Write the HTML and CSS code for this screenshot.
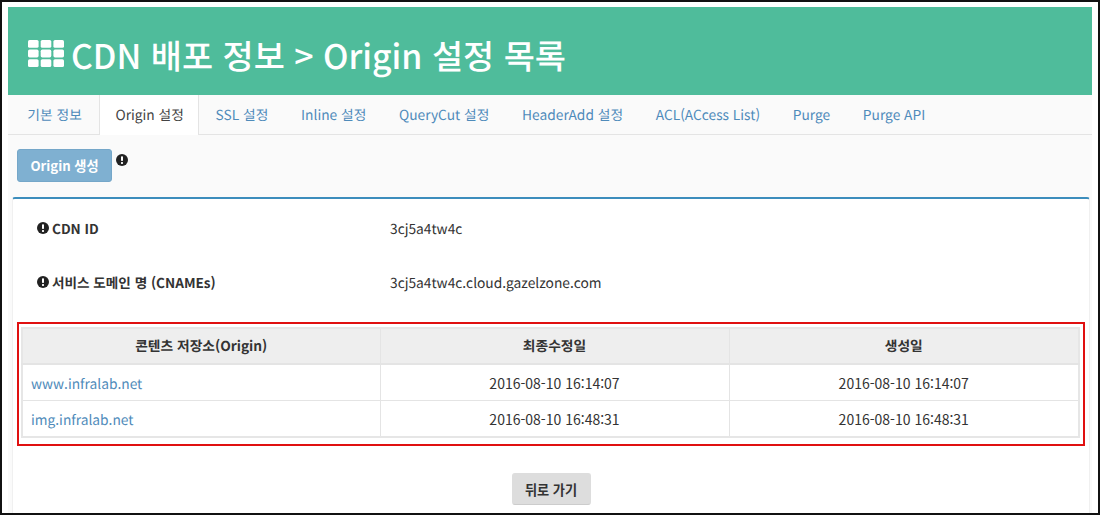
FILE: index.html
```html
<!DOCTYPE html>
<html lang="ko">
<head>
    <meta charset="UTF-8">
    <title>Origin 설정 목록</title>
    <link rel="stylesheet" href="styles.css">
</head>
<body>
    <div class="shot">
        <div class="page">
            <div class="title-bar">
                <h1>
                    <svg class="th-icon" viewBox="0 0 36 27" width="36" height="27">
                        <g fill="#fff">
                            <rect x="0" y="0" width="10.6" height="7.8" rx="1.6"/>
                            <rect x="12.7" y="0" width="10.6" height="7.8" rx="1.6"/>
                            <rect x="25.4" y="0" width="10.6" height="7.8" rx="1.6"/>
                            <rect x="0" y="9.6" width="10.6" height="7.8" rx="1.6"/>
                            <rect x="12.7" y="9.6" width="10.6" height="7.8" rx="1.6"/>
                            <rect x="25.4" y="9.6" width="10.6" height="7.8" rx="1.6"/>
                            <rect x="0" y="19.2" width="10.6" height="7.8" rx="1.6"/>
                            <rect x="12.7" y="19.2" width="10.6" height="7.8" rx="1.6"/>
                            <rect x="25.4" y="19.2" width="10.6" height="7.8" rx="1.6"/>
                        </g>
                    </svg>
                    <span>CDN 배포 정보 &gt; Origin 설정 목록</span>
                </h1>
            </div>

            <ul class="tabs">
                <li><a href="#">기본 정보</a></li>
                <li class="active"><a href="#">Origin 설정</a></li>
                <li><a href="#">SSL 설정</a></li>
                <li><a href="#">Inline 설정</a></li>
                <li><a href="#">QueryCut 설정</a></li>
                <li><a href="#">HeaderAdd 설정</a></li>
                <li><a href="#">ACL(ACcess List)</a></li>
                <li><a href="#">Purge</a></li>
                <li><a href="#">Purge API</a></li>
            </ul>

            <div class="toolbar">
                <button class="btn-primary">Origin 생성</button>
                <svg class="info-icon" viewBox="0 0 12 12" width="12" height="12">
                    <circle cx="6" cy="6" r="6" fill="#222"/>
                    <rect x="5" y="2.2" width="2" height="4.8" rx="0.8" fill="#fff"/>
                    <rect x="5" y="8" width="2" height="1.9" rx="0.6" fill="#fff"/>
                </svg>
            </div>

            <div class="box">
                <div class="field">
                    <div class="field-label">
                        <svg class="info-icon" viewBox="0 0 12 12" width="12" height="12">
                            <circle cx="6" cy="6" r="6" fill="#222"/>
                            <rect x="5" y="2.2" width="2" height="4.8" rx="0.8" fill="#fff"/>
                            <rect x="5" y="8" width="2" height="1.9" rx="0.6" fill="#fff"/>
                        </svg>
                        CDN ID
                    </div>
                    <div class="field-value">3cj5a4tw4c</div>
                </div>
                <div class="field">
                    <div class="field-label">
                        <svg class="info-icon" viewBox="0 0 12 12" width="12" height="12">
                            <circle cx="6" cy="6" r="6" fill="#222"/>
                            <rect x="5" y="2.2" width="2" height="4.8" rx="0.8" fill="#fff"/>
                            <rect x="5" y="8" width="2" height="1.9" rx="0.6" fill="#fff"/>
                        </svg>
                        서비스 도메인 명 (CNAMEs)
                    </div>
                    <div class="field-value">3cj5a4tw4c.cloud.gazelzone.com</div>
                </div>

                <div class="highlight">
                    <table class="origin-table">
                        <thead>
                            <tr>
                                <th class="col-origin">콘텐츠 저장소(Origin)</th>
                                <th class="col-modified">최종수정일</th>
                                <th>생성일</th>
                            </tr>
                        </thead>
                        <tbody>
                            <tr>
                                <td><a href="#">www.infralab.net</a></td>
                                <td class="center">2016-08-10 16:14:07</td>
                                <td class="center">2016-08-10 16:14:07</td>
                            </tr>
                            <tr>
                                <td><a href="#">img.infralab.net</a></td>
                                <td class="center">2016-08-10 16:48:31</td>
                                <td class="center">2016-08-10 16:48:31</td>
                            </tr>
                        </tbody>
                    </table>
                </div>

                <div class="actions">
                    <button class="btn-default">뒤로 가기</button>
                </div>
            </div>
        </div>
    </div>
</body>
</html>
```

FILE: styles.css
```css
html, body {
    margin: 0;
    padding: 0;
    height: 515px;
    overflow: hidden;
}

body {
    background-color: #fff;
    font-family: "Noto Sans CJK KR", "Noto Sans", sans-serif;
    font-size: 13.75px;
    color: #333;
    text-rendering: geometricPrecision;
}

a {
    color: #4f8bba;
    text-decoration: none;
}

.shot {
    box-sizing: border-box;
    height: 515px;
    width: 1100px;
    border: 2px solid #111;
    padding: 5px 6px 0;
    overflow: hidden;
}

.page {
    background-color: #fafafa;
    height: 520px;
}

.title-bar {
    background-color: #4fbc9b;
    height: 88px;
    display: flex;
    align-items: center;
    padding-left: 20px;
}

.title-bar h1 {
    margin: 0;
    font-size: 33.85px;
    font-weight: 500;
    color: #fff;
    display: flex;
    align-items: center;
    gap: 7px;
    line-height: 1;
}

.title-bar h1 span {
    padding-top: 7px;
}

.th-icon {
    margin-top: 4px;
}

.tabs {
    list-style: none;
    margin: 0;
    padding: 0 0 0 3px;
    display: flex;
    height: 39px;
    border-bottom: 1px solid #e4e4e4;
}

.tabs li a {
    display: block;
    padding: 0 16.35px;
    line-height: 39px;
    height: 39px;
}

.tabs li.active a {
    background-color: #fff;
    color: #444;
    height: 40px;
    margin-left: 1px;
    border-left: 1px solid #e4e4e4;
    border-right: 1px solid #e4e4e4;
    padding: 0 14.35px 0 15.35px;
}

.toolbar {
    display: flex;
    align-items: flex-start;
    gap: 4px;
    padding: 14px 0 0 9px;
    height: 48px;
}

.toolbar .info-icon {
    margin-top: 5px;
}

.btn-primary {
    width: 95px;
    height: 33px;
    padding: 0;
    background-color: #7fb0d1;
    border: 1px solid #75a7c9;
    border-radius: 3px;
    color: #fff;
    font-family: inherit;
    font-size: 13.2px;
    font-weight: 700;
}

.box {
    margin: 0 2px 0 4px;
    background-color: #fff;
    border-top: 2px solid #3c8dbc;
    border-left: 1px solid #f0f0f0;
    border-right: 1px solid #f0f0f0;
    border-radius: 3px;
    padding: 0 4px;
    height: 330px;
}

.field {
    box-sizing: border-box;
    display: flex;
    height: 54px;
    padding: 19px 0 0 20px;
}

.field-label {
    width: 353px;
    font-size: 13.6px;
    font-weight: 700;
    color: #333;
    display: flex;
    align-items: center;
    gap: 3px;
    height: 20px;
}

.field-value {
    line-height: 20px;
}

.highlight {
    border: 2px solid #e01010;
    padding: 3px 3px 6px 2px;
    margin-top: 15px;
}

.origin-table {
    width: 100%;
    border-collapse: collapse;
    table-layout: fixed;
    background-color: #fff;
    border: 2px solid #e6e6e6;
}

.origin-table th,
.origin-table td {
    border: 1px solid #e4e4e4;
    height: 36px;
    padding: 1px 8px 0;
    box-sizing: border-box;
}

.origin-table th {
    background-color: #eee;
    font-weight: 700;
    border-bottom-width: 2px;
    height: 36px;
    padding: 0 8px 2px;
}

.origin-table tbody tr:last-child td {
    height: 37px;
}

.col-origin {
    width: 358px;
}

.col-modified {
    width: 349px;
}

.origin-table .center {
    text-align: center;
    font-size: 14px;
    text-rendering: auto;
    line-height: 20px;
}

.actions {
    text-align: center;
    padding-top: 27px;
}

.btn-default {
    width: 79px;
    height: 32px;
    padding: 0;
    background-color: #ddd;
    border: 1px solid #ddd;
    border-bottom-color: #ccc;
    border-radius: 3px;
    color: #333;
    font-family: inherit;
    font-size: 13.2px;
    font-weight: 700;
}
```
